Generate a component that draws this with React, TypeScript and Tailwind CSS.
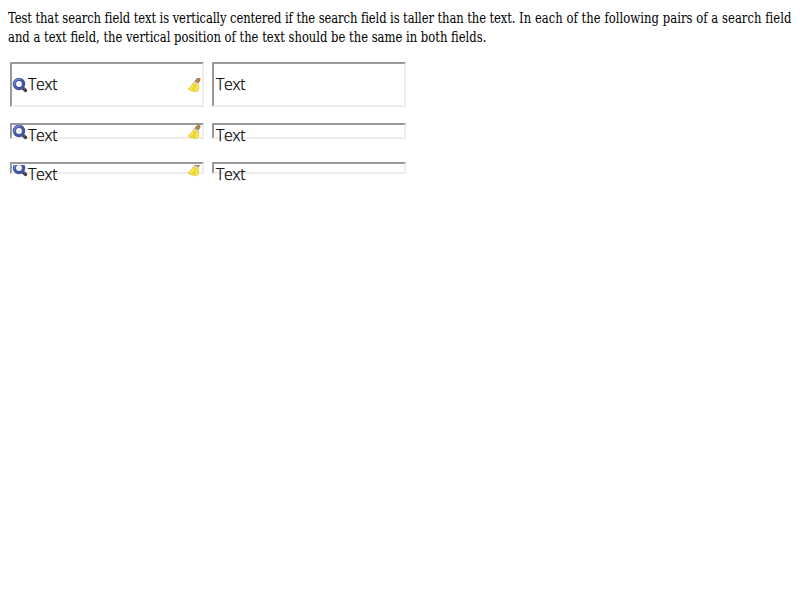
import React from "react";

function Magnifier() {
  return (
    <svg viewBox="0 0 16 16" className="block size-4">
      <path d="M10.7 10.8L13.6 13.5" stroke="#3c3c3c" strokeWidth="3.2" strokeLinecap="round" />
      <path d="M11.7 11.2L13 12.4" stroke="#8a8a8a" strokeWidth=".8" />
      <circle cx="7" cy="7" r="4.6" fill="#f4f6fd" stroke="#4355a2" strokeWidth="3.3" />
      <path d="M2.6 8.2a4.6 4.6 0 0 1 6.2-5.6" fill="none" stroke="#7591d2" strokeWidth="1.2" />
    </svg>
  );
}

function Broom() {
  return (
    <svg viewBox="-0.5 0 16 16" className="block size-4">
      <path d="M7.8 4.8L10.2 1.6Q11.5 .8 13.9 1.3L13.8 3.5 11.8 6.6Z" fill="#a2733a" />
      <path d="M12.8 1.8L9.8 5.2" stroke="#d3a468" strokeWidth="1" />
      <path d="M6.4 5.8L12.2 7.4 12.2 12.5 10.4 14.8Q5 15 1.3 12.1 4.9 10.1 6.4 5.8Z" fill="#f0dc38" stroke="#d9c13c" strokeWidth=".5" />
      <path d="M7 7.8L4.1 12.1M10.6 8.4L9.8 13.8" stroke="#fff27a" strokeWidth=".8" />
      <path d="M8.8 8.2L6.8 13.6" stroke="#dec82f" strokeWidth=".8" />
      <path d="M6.7 5.3L12.3 7.1" stroke="#e0d3c4" strokeWidth="1.7" />
    </svg>
  );
}

const frame = "w-[194px] border-2 border-t-[#999] border-l-[#999] border-r-[#eee] border-b-[#eee] bg-white";
const value = "block h-[22px] whitespace-nowrap font-['Open_Sans',sans-serif] text-[16px] font-light leading-[22px] tracking-[-0.3px] text-black [-webkit-text-stroke:0.25px_black]";

function Fields({ height, textTop, iconTop, iconClip }: { height: string; textTop: string; iconTop: string; iconClip: string }) {
  return (
    <div className={`flex gap-2 ${height}`}>
      <div className={`flex items-start ${frame}`}>
        <span className={`size-4 shrink-0 ${iconTop} ${iconClip}`}><Magnifier /></span>
        <span className={`flex-1 ${value} ${textTop}`}>Text</span>
        <span className={`size-4 shrink-0 ${iconTop} ${iconClip}`}><Broom /></span>
      </div>
      <div className={`pl-0.5 ${frame}`}>
        <span className={`${value} ${textTop}`}>Text</span>
      </div>
    </div>
  );
}

export default function App() {
  return (
    <main className="h-[600px] w-[800px] overflow-hidden bg-white px-2 pt-2 text-black">
      <p className="h-[54px] w-fit origin-top-left scale-x-[0.858] whitespace-nowrap pt-px font-['DejaVu_Serif_Condensed','DejaVu_Serif',serif] text-[15px] leading-[19px]">
        <span className="tracking-[-0.1px]">Test that search field text is vertically centered if the search field is taller than the text. </span>
        <span className="tracking-[0.06px]">In each of the following pairs of a search field</span>
        <br />
        and a text field, the vertical position of the text should be the same in both fields.
      </p>
      <div className="flex flex-col px-0.5">
        <div className="h-[61px]">
          <Fields height="h-[45px]" textTop="mt-[9px]" iconTop="mt-[13px]" iconClip="" />
        </div>
        <div className="h-[39px]">
          <Fields height="h-4" textTop="mt-[-1px]" iconTop="mt-[-1px]" iconClip="[clip-path:inset(1px_0_0_0)]" />
        </div>
        <Fields height="h-3" textTop="mt-[-1px]" iconTop="mt-[-3px]" iconClip="[clip-path:inset(4px_0_0_0)]" />
      </div>
    </main>
  );
}
